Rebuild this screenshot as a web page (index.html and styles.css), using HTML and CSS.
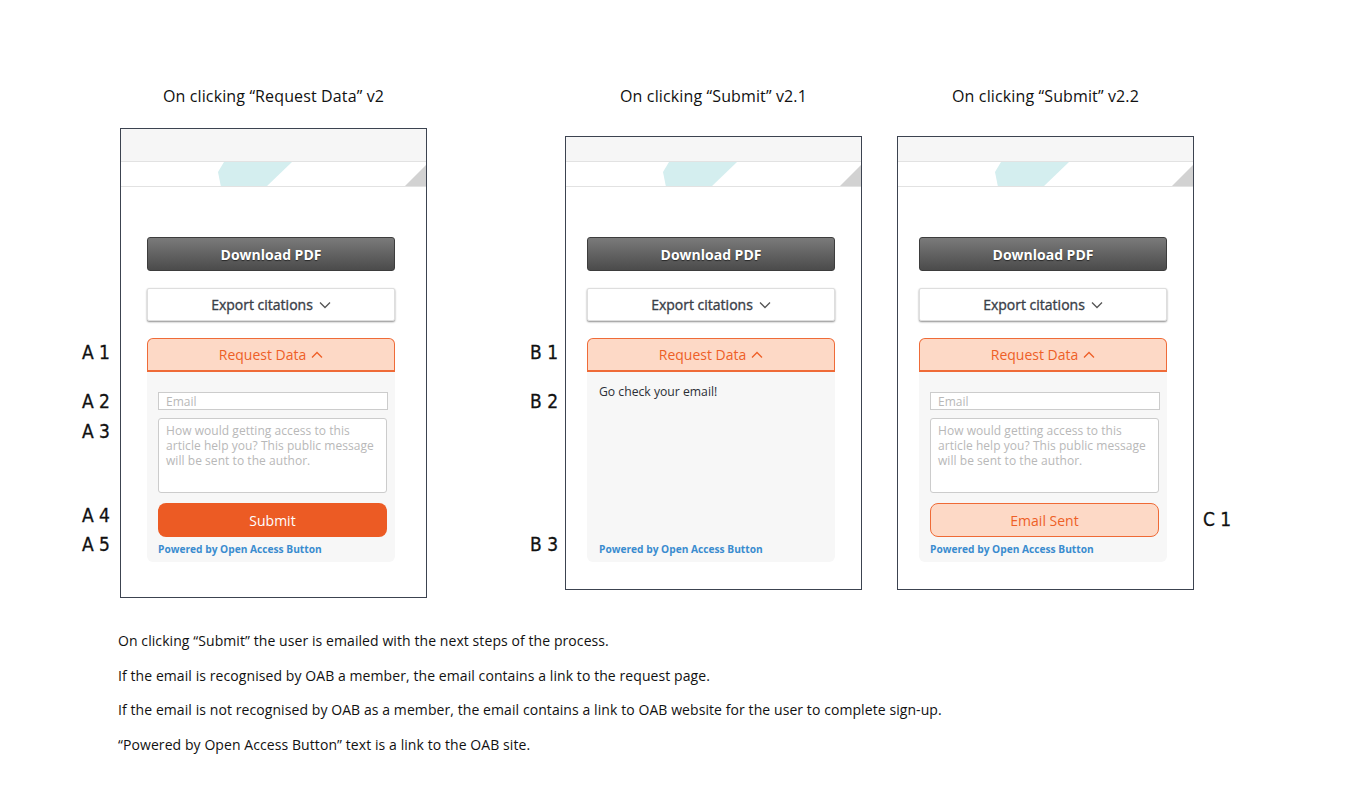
FILE: index.html
```html
<!DOCTYPE html>
<html lang="en">
<head>
<meta charset="utf-8">
<title>Request Data flow</title>
<link rel="stylesheet" href="styles.css">
</head>
<body>
<div class="page">
  <div class="boards">
    <!-- Column A -->
    <div class="col col-a">
      <div class="labels labels-a">
        <span class="lbl a1">A 1</span>
        <span class="lbl a2">A 2</span>
        <span class="lbl a3">A 3</span>
        <span class="lbl a4">A 4</span>
        <span class="lbl a5">A 5</span>
      </div>
      <div class="stage stage-a">
        <h2 class="title">On clicking “Request Data” v2</h2>
        <div class="phone phone-a">
          <div class="bar"></div>
          <div class="band">
            <svg class="teal" width="74" height="25" viewBox="0 0 74 25"><polygon points="6,0 74,0 48,25 3,25 0,10" fill="#d4eeef"/></svg>
            <svg class="corner" width="21" height="21" viewBox="0 0 21 21"><polygon points="0,21 21,0 21,21" fill="#d2d2d2"/></svg>
          </div>
          <div class="body">
            <div class="btn-dl">Download PDF</div>
            <div class="btn-export">Export citations <svg class="chev" width="12" height="8" viewBox="0 0 12 8"><polyline points="1,1.5 6,6.5 11,1.5" fill="none" stroke="#555" stroke-width="1.3"/></svg></div>
            <div class="req">Request Data <svg class="chev" width="12" height="8" viewBox="0 0 12 8"><polyline points="1,6.5 6,1.5 11,6.5" fill="none" stroke="#ee5f27" stroke-width="1.3"/></svg></div>
            <div class="panel">
              <input class="field" type="text" placeholder="Email">
              <textarea class="msg" placeholder="How would getting access to this article help you? This public message will be sent to the author."></textarea>
              <div class="btn-submit">Submit</div>
              <a class="powered" href="#">Powered by Open Access Button</a>
            </div>
          </div>
        </div>
      </div>
    </div>

    <!-- Column B -->
    <div class="col col-b">
      <div class="labels labels-b">
        <span class="lbl b1">B 1</span>
        <span class="lbl b2">B 2</span>
        <span class="lbl b3">B 3</span>
      </div>
      <div class="stage stage-b">
        <h2 class="title">On clicking “Submit” v2.1</h2>
        <div class="phone phone-b">
          <div class="bar"></div>
          <div class="band">
            <svg class="teal" width="74" height="25" viewBox="0 0 74 25"><polygon points="6,0 74,0 48,25 3,25 0,10" fill="#d4eeef"/></svg>
            <svg class="corner" width="21" height="21" viewBox="0 0 21 21"><polygon points="0,21 21,0 21,21" fill="#d2d2d2"/></svg>
          </div>
          <div class="body">
            <div class="btn-dl">Download PDF</div>
            <div class="btn-export">Export citations <svg class="chev" width="12" height="8" viewBox="0 0 12 8"><polyline points="1,1.5 6,6.5 11,1.5" fill="none" stroke="#555" stroke-width="1.3"/></svg></div>
            <div class="req">Request Data <svg class="chev" width="12" height="8" viewBox="0 0 12 8"><polyline points="1,6.5 6,1.5 11,6.5" fill="none" stroke="#ee5f27" stroke-width="1.3"/></svg></div>
            <div class="panel panel-done">
              <p class="done">Go check your email!</p>
              <a class="powered" href="#">Powered by Open Access Button</a>
            </div>
          </div>
        </div>
      </div>
    </div>

    <!-- Column C -->
    <div class="col col-c">
      <div class="stage stage-c">
        <h2 class="title">On clicking “Submit” v2.2</h2>
        <div class="phone phone-c">
          <div class="bar"></div>
          <div class="band">
            <svg class="teal" width="74" height="25" viewBox="0 0 74 25"><polygon points="6,0 74,0 48,25 3,25 0,10" fill="#d4eeef"/></svg>
            <svg class="corner" width="21" height="21" viewBox="0 0 21 21"><polygon points="0,21 21,0 21,21" fill="#d2d2d2"/></svg>
          </div>
          <div class="body">
            <div class="btn-dl">Download PDF</div>
            <div class="btn-export">Export citations <svg class="chev" width="12" height="8" viewBox="0 0 12 8"><polyline points="1,1.5 6,6.5 11,1.5" fill="none" stroke="#555" stroke-width="1.3"/></svg></div>
            <div class="req">Request Data <svg class="chev" width="12" height="8" viewBox="0 0 12 8"><polyline points="1,6.5 6,1.5 11,6.5" fill="none" stroke="#ee5f27" stroke-width="1.3"/></svg></div>
            <div class="panel">
              <input class="field" type="text" placeholder="Email">
              <textarea class="msg" placeholder="How would getting access to this article help you? This public message will be sent to the author."></textarea>
              <div class="btn-sent">Email Sent</div>
              <a class="powered" href="#">Powered by Open Access Button</a>
            </div>
          </div>
        </div>
      </div>
      <div class="labels labels-c">
        <span class="lbl c1">C 1</span>
      </div>
    </div>
  </div>

  <div class="notes">
    <p>On clicking “Submit” the user is emailed with the next steps of the process.</p>
    <p>If the email is recognised by OAB a member, the email contains a link to the request page.</p>
    <p>If the email is not recognised by OAB as a member, the email contains a link to OAB website for the user to complete sign-up.</p>
    <p>“Powered by Open Access Button” text is a link to the OAB site.</p>
  </div>
</div>
</body>
</html>
```

FILE: styles.css
```css
* { box-sizing: border-box; }

html, body {
  margin: 0;
  padding: 0;
  background: #ffffff;
}

body {
  font-family: "Open Sans", "Noto Sans", sans-serif;
  color: #111111;
}

.page {
  width: 1366px;
  height: 806px;
  padding-top: 86px;
}

.boards {
  display: flex;
  align-items: flex-start;
  padding-left: 82px;
}

.col {
  display: flex;
  align-items: flex-start;
}

.col-b { margin-left: 103px; }
.col-c { margin-left: 35px; }

/* annotation labels */
.labels {
  display: flex;
  flex-direction: column;
}
.labels-a { width: 38px; }
.labels-b { width: 35px; }
.labels-c { margin-left: 9px; }

.lbl {
  display: block;
  font-family: "Liberation Sans Narrow", "DejaVu Sans Condensed", "Liberation Sans", sans-serif;
  font-size: 19px;
  line-height: 20px;
  color: #111;
  white-space: nowrap;
  -webkit-text-stroke: 0.3px #111;
}
.a1, .b1 { margin-top: 256px; }
.a2, .b2 { margin-top: 29px; }
.a3 { margin-top: 10px; }
.a4 { margin-top: 64px; }
.a5 { margin-top: 9px; }
.b3 { margin-top: 123px; }
.c1 { margin-top: 423px; }

/* stage */
.stage {
  display: flex;
  flex-direction: column;
  align-items: center;
}
.stage-a { width: 307px; }
.stage-b, .stage-c { width: 297px; }

.title {
  margin: 0;
  font-size: 16px;
  font-weight: 400;
  line-height: 20px;
  letter-spacing: 0.13px;
  color: #111;
  white-space: nowrap;
}

.phone {
  border: 1px solid #3c4350;
  background: #ffffff;
  display: flex;
  flex-direction: column;
  width: 100%;
}
.phone-a { margin-top: 22px; height: 470px; }
.phone-b, .phone-c { margin-top: 30px; height: 454px; }

.bar {
  background: #f6f6f6;
  border-bottom: 1px solid #e2e2e2;
  height: 25px;
}
.phone-a .bar { height: 33px; }

.band {
  height: 25px;
  border-bottom: 1px solid #e2e2e2;
  display: flex;
  align-items: flex-end;
  overflow: hidden;
}
.band .teal {
  display: block;
  margin-left: 97px;
  margin-bottom: -1px;
}
.band .corner {
  display: block;
  margin-left: auto;
}

.body {
  padding-top: 50px;
  display: flex;
  flex-direction: column;
  width: 248px;
}
.phone-a .body { margin-left: 26px; }
.phone-b .body, .phone-c .body { margin-left: 21px; }

.btn-dl {
  height: 34px;
  border: 1px solid #3d3d3d;
  border-radius: 3px;
  background: linear-gradient(#7a7a7a, #4b4b4b);
  color: #ffffff;
  font-size: 14px;
  font-weight: 700;
  display: flex;
  align-items: center;
  justify-content: center;
  text-shadow: 0 1px 1px rgba(0, 0, 0, 0.55);
}

.btn-export {
  margin-top: 17px;
  height: 33px;
  background: #ffffff;
  border: 1px solid #dedede;
  border-radius: 2px;
  box-shadow: 0 1px 2px rgba(0, 0, 0, 0.45);
  color: #3a4048;
  font-size: 14px;
  font-weight: 400;
  -webkit-text-stroke: 0.35px #3a4048;
  display: flex;
  align-items: center;
  justify-content: center;
  gap: 6px;
}

.req {
  margin-top: 17px;
  height: 34px;
  background: #fdd9c6;
  border: 1px solid #ef6b38;
  border-bottom-width: 2px;
  border-radius: 6px 6px 0 0;
  color: #ee5f27;
  font-size: 14px;
  display: flex;
  align-items: center;
  justify-content: center;
  gap: 5px;
}

.chev { display: block; }

.panel {
  height: 190px;
  background: #f7f7f7;
  border-radius: 0 0 6px 6px;
  padding: 20px 7px 6px 11px;
  display: flex;
  flex-direction: column;
}

.field {
  display: block;
  width: 230px;
  height: 18px;
  margin: 0;
  padding: 0 7px;
  border: 1px solid #cccccc;
  border-radius: 0;
  background: #ffffff;
  font-family: "Open Sans", sans-serif;
  font-size: 12px;
  color: #333;
  outline: none;
}
.field::placeholder { color: #b8b8b8; }

.msg {
  display: block;
  width: 229px;
  height: 75px;
  margin: 8px 0 0;
  padding: 4px 7px;
  border: 1px solid #cccccc;
  border-radius: 3px;
  background: #ffffff;
  font-family: "Open Sans", sans-serif;
  font-size: 12px;
  line-height: 15px;
  letter-spacing: 0.05px;
  resize: none;
  outline: none;
  overflow: hidden;
}
.msg::placeholder { color: #b8b8b8; }

.btn-submit,
.btn-sent {
  margin-top: 10px;
  width: 229px;
  height: 34px;
  border-radius: 8px;
  font-size: 14px;
  display: flex;
  align-items: center;
  justify-content: center;
}
.btn-submit {
  background: #ec5b24;
  color: #ffffff;
}
.btn-sent {
  background: #fdd9c6;
  border: 1px solid #ef6a36;
  color: #ee5f27;
}

.powered {
  margin-top: auto;
  font-size: 10.2px;
  line-height: 14px;
  font-weight: 700;
  color: #3a8ccf;
  text-decoration: none;
  white-space: nowrap;
}

.panel-done { padding: 11px 7px 6px 12px; }

.done {
  margin: 0;
  font-size: 12.2px;
  line-height: 18px;
  color: #2b2f36;
}

/* notes */
.notes {
  margin-top: 33px;
  padding-left: 118px;
}
.notes p {
  margin: 0 0 14.7px;
  font-size: 14px;
  line-height: 20px;
  letter-spacing: 0.08px;
  color: #111;
}
```
